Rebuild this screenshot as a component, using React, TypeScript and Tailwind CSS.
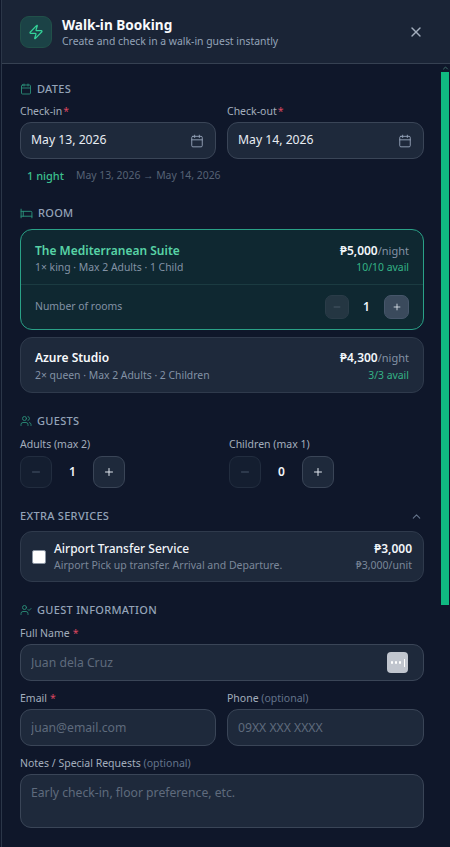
import { Zap, X, Calendar, Bed, Users, UserCheck, ChevronUp, Minus, Plus } from "lucide-react";
import type { ReactNode } from "react";

const font = { fontFamily: '"Noto Sans", sans-serif' };

function SectionTitle({ icon, children }: { icon?: ReactNode; children: ReactNode }) {
  return (
    <div className="flex items-center gap-[5px] h-[16px]">
      {icon}
      <span className="text-[11px] font-medium tracking-[0.3px] text-[#94a3b8] leading-4">{children}</span>
    </div>
  );
}

function Label({ children, className = "" }: { children: ReactNode; className?: string }) {
  return <div className={"text-[10.5px] leading-4 text-[#a3aebd] " + className}>{children}</div>;
}

function Star({ spaced = false }: { spaced?: boolean }) {
  return <span className={spaced ? "text-[#d9465f] ml-[3px]" : "text-[#d9465f] ml-[1px]"}>*</span>;
}

function DateBox({ value }: { value: string }) {
  return (
    <div className="flex-1 h-[37px] rounded-[11px] border border-[#3a4557] bg-[#1e293b] flex items-center justify-between pl-[10px] pr-[11px]">
      <span className="text-[12.2px] text-[#e8edf3]">{value}</span>
      <Calendar className="w-[14px] h-[14px] text-[#94a3b8]" strokeWidth={1.6} />
    </div>
  );
}

function Stepper({ value }: { value: string }) {
  return (
    <div className="flex items-center">
      <button className="w-[32px] h-[32px] rounded-[9px] border border-[#222d3f] bg-[#141e30] flex items-center justify-center text-[#475569]">
        <Minus className="w-[12px] h-[12px]" strokeWidth={2} />
      </button>
      <span className="w-[41px] text-center text-[12px] font-semibold text-[#f1f5f9]">{value}</span>
      <button className="w-[32px] h-[32px] rounded-[9px] border border-[#3a4557] bg-[#1e293b] flex items-center justify-center text-[#e2e8f0]">
        <Plus className="w-[12px] h-[12px]" strokeWidth={2} />
      </button>
    </div>
  );
}

function TextField({ placeholder, rightSlot }: { placeholder: string; rightSlot?: ReactNode }) {
  return (
    <div className="relative h-[37px] rounded-[11px] border border-[#3a4557] bg-[#1e293b] flex items-center pl-[10px] pr-[12px] pt-[1px]">
      <input
        readOnly
        placeholder={placeholder}
        style={font}
        className="w-full bg-transparent outline-none text-[12.2px] placeholder:text-[#5f6b7d]"
      />
      {rightSlot}
    </div>
  );
}

export default function App() {
  return (
    <div style={font} className="relative w-[450px] h-[847px] overflow-hidden bg-[#0f172a] pl-[1px]">
      <div className="h-full border-l border-[#2b3648] flex flex-col">
        <header className="h-[64px] shrink-0 bg-[#1a2436] border-b border-[#364152] flex items-center pl-[18px] pr-[26px]">
          <div className="w-[32px] h-[32px] rounded-[9px] bg-[#1b4246] border border-[#215049] flex items-center justify-center">
            <Zap className="w-[16px] h-[16px] text-[#34d399]" strokeWidth={1.8} />
          </div>
          <div className="ml-[10px] flex-1 pt-[2px]">
            <div className="text-[13.6px] leading-[16px] font-bold text-[#f8fafc]">Walk-in Booking</div>
            <div className="text-[10.4px] leading-[16px] text-[#94a3b8]">Create and check in a walk-in guest instantly</div>
          </div>
          <X className="w-[16px] h-[16px] text-[#a3aebd]" strokeWidth={2} />
        </header>

        <main className="flex-1 pl-[18px] pr-[26px] pt-[17px]">
          <SectionTitle icon={<Calendar className="w-[12px] h-[12px] text-[#2a8f78]" strokeWidth={1.8} />}>DATES</SectionTitle>
          <div className="flex gap-[11px] mt-[6px]">
            <div className="w-[196px]">
              <Label>Check-in<Star /></Label>
              <div className="flex mt-[3px]"><DateBox value="May 13, 2026" /></div>
            </div>
            <div className="flex-1">
              <Label>Check-out<Star /></Label>
              <div className="flex mt-[3px]"><DateBox value="May 14, 2026" /></div>
            </div>
          </div>
          <div className="flex items-center mt-[8px] pl-[7px] h-[18px]">
            <span className="text-[11px] font-medium text-[#3cc08f]">1 night</span>
            <span className="ml-[12px] text-[10.4px] text-[#566275]">May 13, 2026 → May 14, 2026</span>
          </div>

          <div className="mt-[20px]">
            <SectionTitle icon={<Bed className="w-[13px] h-[13px] text-[#2a8f78]" strokeWidth={1.8} />}>ROOM</SectionTitle>
          </div>
          <div className="mt-[8px] rounded-[12px] border border-[#2aa187] bg-[#0f2831]">
            <div className="h-[55px] pt-[4px] flex items-center justify-between px-[14px] border-b border-[#1b3b41]">
              <div>
                <div className="text-[12px] leading-[17px] font-semibold text-[#58d3a6]">The Mediterranean Suite</div>
                <div className="text-[10.4px] leading-[17px] text-[#8392a5]">1× king · Max 2 Adults · 1 Child</div>
              </div>
              <div className="text-right">
                <div className="text-[12px] leading-[17px] font-semibold text-[#f1f5f9]">₱5,000<span className="text-[11px] font-normal text-[#8392a5]">/night</span></div>
                <div className="text-[10.4px] leading-[17px] text-[#34b386]">10/10 avail</div>
              </div>
            </div>
            <div className="h-[44px] flex items-center justify-between px-[14px]">
              <span className="text-[10.4px] text-[#8392a5]">Number of rooms</span>
              <div className="flex items-center">
                <div className="w-[24px] h-[24px] rounded-[7px] bg-[#243642] border border-[#2a3c48] flex items-center justify-center text-[#4d5e6e]"><Minus className="w-[10px] h-[10px]" strokeWidth={2} /></div>
                <span className="w-[35px] text-center text-[12px] font-semibold text-[#f1f5f9]">1</span>
                <div className="w-[25px] h-[24px] rounded-[7px] bg-[#3a4a5c] border border-[#46566a] flex items-center justify-center text-[#e2e8f0]"><Plus className="w-[10px] h-[10px]" strokeWidth={2} /></div>
              </div>
            </div>
          </div>
          <div className="mt-[7px] h-[56px] pt-[2px] rounded-[12px] border border-[#2f3a4c] bg-[#1e293b] flex items-center justify-between px-[14px]">
            <div>
              <div className="text-[12px] leading-[17px] font-semibold text-[#f8fafc]">Azure Studio</div>
              <div className="text-[10.4px] leading-[18px] text-[#8392a5]">2× queen · Max 2 Adults · 2 Children</div>
            </div>
            <div className="text-right">
              <div className="text-[12px] leading-[17px] font-semibold text-[#f1f5f9]">₱4,300<span className="text-[11px] font-normal text-[#8392a5]">/night</span></div>
              <div className="text-[10.4px] leading-[18px] text-[#34b386]">3/3 avail</div>
            </div>
          </div>

          <div className="mt-[20px]">
            <SectionTitle icon={<Users className="w-[12px] h-[12px] text-[#2a8f78]" strokeWidth={1.8} />}>GUESTS</SectionTitle>
          </div>
          <div className="flex mt-[7px]">
            <div className="w-[209px]">
              <Label>Adults (max 2)</Label>
              <div className="mt-[4px]"><Stepper value="1" /></div>
            </div>
            <div>
              <Label>Children (max 1)</Label>
              <div className="mt-[4px]"><Stepper value="0" /></div>
            </div>
          </div>

          <div className="mt-[20px] flex items-center justify-between pr-[1px]">
            <SectionTitle>EXTRA SERVICES</SectionTitle>
            <ChevronUp className="w-[13px] h-[13px] text-[#64748b]" strokeWidth={2} />
          </div>
          <div className="mt-[7px] h-[51px] rounded-[12px] border border-[#2f3a4c] bg-[#1e293b] flex items-center pl-[11px] pr-[11px]">
            <div className="w-[14px] h-[14px] rounded-[2px] bg-white border border-[#8b95a3]" />
            <div className="ml-[8px] flex-1">
              <div className="text-[12px] leading-[17px] font-medium text-[#f1f5f9]">Airport Transfer Service</div>
              <div className="text-[10.5px] leading-[16px] text-[#7b8799]">Airport Pick up transfer. Arrival and Departure.</div>
            </div>
            <div className="text-right">
              <div className="text-[12px] leading-[17px] font-semibold text-[#f1f5f9]">₱3,000</div>
              <div className="text-[10.5px] leading-[16px] text-[#7b8799]">₱3,000/unit</div>
            </div>
          </div>

          <div className="mt-[20px]">
            <SectionTitle icon={<UserCheck className="w-[12px] h-[12px] text-[#2a8f78]" strokeWidth={1.8} />}>GUEST INFORMATION</SectionTitle>
          </div>
          <Label className="mt-[7px]">Full Name<Star spaced /></Label>
          <div className="mt-[3px]">
            <TextField
              placeholder="Juan dela Cruz"
              rightSlot={
                <div className="absolute right-[15px] top-[7px] w-[21px] h-[21px] rounded-[4px] bg-[#c0c5ce] flex items-center justify-center gap-[1.5px]">
                  <span className="w-[2.5px] h-[2.5px] rounded-full bg-white" />
                  <span className="w-[2.5px] h-[2.5px] rounded-full bg-white" />
                  <span className="w-[2.5px] h-[2.5px] rounded-full bg-white" />
                  <span className="w-[1px] h-[8px] bg-white ml-[1px]" />
                </div>
              }
            />
          </div>
          <div className="flex gap-[11px] mt-[9px]">
            <div className="w-[196px]">
              <Label>Email<Star spaced /></Label>
              <div className="mt-[3px]"><TextField placeholder="juan@email.com" /></div>
            </div>
            <div className="flex-1">
              <Label>Phone <span className="text-[#64748b]">(optional)</span></Label>
              <div className="mt-[3px]"><TextField placeholder="09XX XXX XXXX" /></div>
            </div>
          </div>
          <Label className="mt-[9px]">Notes / Special Requests <span className="text-[#64748b]">(optional)</span></Label>
          <textarea
            readOnly
            placeholder="Early check-in, floor preference, etc."
            style={font}
            className="block mt-[3px] w-full h-[54px] resize-none rounded-[11px] border border-[#3a4557] bg-[#1e293b] outline-none px-[10px] pt-[10px] text-[12.2px] leading-[16px] placeholder:text-[#5f6b7d]"
          />
        </main>
      </div>

      {/* scrollbar overlay */}
      <div className="absolute right-0 top-[64px] w-[9px] h-[783px] bg-[#0f172a]">
        <ChevronUp className="absolute left-0 top-0 w-[9px] h-[8px] text-[#3f6f68]" strokeWidth={3} />
        <div className="absolute left-0 top-[8px] w-[8px] h-[533px] bg-[#10b981]" />
      </div>
    </div>
  );
}
